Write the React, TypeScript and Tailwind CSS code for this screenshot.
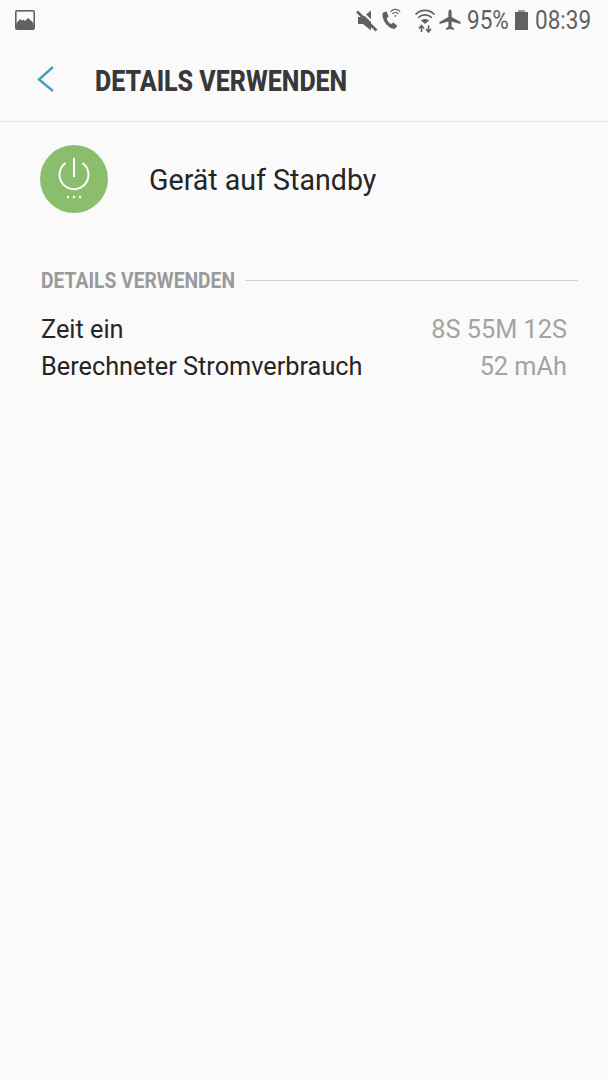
import React from "react";

const StatusIcons = () => (
  <div className="flex items-center text-[#616161]">
    {/* muted */}
    <svg width="24" height="24" viewBox="0 0 24 24" className="-mt-[1px]">
      <path d="M3 9h5l8-6.5v20L8 16H3z" fill="#616161" />
      <path d="M5 2 L23 19.5" stroke="#fafafa" strokeWidth="2" />
      <path d="M2 3.5 L21.5 22.5" stroke="#616161" strokeWidth="2.6" />
    </svg>
    {/* wifi call */}
    <svg width="26" height="26" viewBox="0 0 24 24" className="-ml-[1px]">
      <path d="M4.5 5.2 L7.8 4 L9.8 8.8 L8 10.5 C8.6 12.8 10 14.6 12.1 15.8 L14 14.2 L17.8 17.2 L16 19.8 C14.5 20.6 11.4 19.8 8.2 16.6 C5 13 3.4 8 4.5 5.2 Z" fill="#616161" />
      <path d="M11.5 4.2 C14.5 1.6 17.5 1.6 20.5 4.2" stroke="#616161" strokeWidth="1" fill="none" />
      <path d="M13.2 6.2 C15 4.7 17 4.7 18.8 6.2" stroke="#616161" strokeWidth="1" fill="none" />
      <path d="M15 8.2 L16 7.1 L17 8.2 L16 9.2 Z" fill="#616161" />
    </svg>
    {/* wifi data */}
    <svg width="22" height="26" viewBox="0 0 22 26" className="ml-[10px]">
      <path d="M1.5 7.5 C7 2 15 2 20.5 7.5" stroke="#616161" strokeWidth="1.7" fill="none" />
      <path d="M4.2 10.6 C8 7 14 7 17.8 10.6" stroke="#616161" strokeWidth="1.7" fill="none" />
      <path d="M7 13.6 C9.4 11.6 12.6 11.6 15 13.6 L11 17 Z" fill="#616161" />
      <path d="M7.5 25 V19.5 M5 21.5 L7.5 18.5 L10 21.5" stroke="#616161" strokeWidth="1.6" fill="none" />
      <path d="M14.5 18.5 V24 M12 22 L14.5 25 L17 22" stroke="#616161" strokeWidth="1.6" fill="none" />
    </svg>
    {/* airplane */}
    <svg width="22" height="22" viewBox="0 0 22 22" className="ml-[3px]">
      <path d="M11 0.5 C12 0.5 12.6 2 12.6 3.5 V8 L21.5 13 V15 L12.6 12.6 V17.6 L15 19.4 V21 L11 20 L7 21 V19.4 L9.4 17.6 V12.6 L0.5 15 V13 L9.4 8 V3.5 C9.4 2 10 0.5 11 0.5 Z" fill="#616161" />
    </svg>
    <span className="ml-[6px] w-[43px] text-[25px] leading-none scale-x-[0.9] origin-left whitespace-nowrap">95%</span>
    {/* battery */}
    <div className="ml-[5px] flex flex-col items-center">
      <div className="w-[7px] h-[2px] bg-[#9a9a9a]" />
      <div className="w-[13px] h-[18px] bg-[#616161]" />
    </div>
    <span className="ml-[7px] w-[56px] text-[25px] leading-none scale-x-[0.9] origin-left whitespace-nowrap">08:39</span>
  </div>
);

const App: React.FC = () => {
  return (
    <div className="w-[608px] h-[1080px] bg-[#fafafa] font-['Roboto',sans-serif] overflow-hidden flex flex-col">
      {/* status bar */}
      <div className="h-[40px] pl-[15px] pr-[17px] flex items-center justify-between">
        <svg width="20" height="20" viewBox="0 0 20 20" className="-mt-[1px]">
          <rect x="0" y="0" width="20" height="20" rx="2" fill="#616161" />
          <rect x="1.6" y="1.6" width="16.8" height="13" fill="#fafafa" />
          <path d="M1.6 13 L5 9 L7 10.5 L8.5 9.5 L10 11 L13 8 L15.5 10 L18.4 13 V15 H1.6 Z" fill="#616161" />
        </svg>
        <StatusIcons />
      </div>

      {/* action bar */}
      <div className="h-[82px] pb-[2px] flex items-center border-b border-[#e4e4e4]">
        <svg width="20" height="30" viewBox="0 0 20 30" className="ml-[36px] mt-[1px]">
          <path d="M17 3 L3 15.5 L17 27" transform="translate(0 -1)" stroke="#459fc4" strokeWidth="2.4" fill="none" />
        </svg>
        <h1 className="ml-[39px] mt-[4px] text-[29px] leading-none font-extrabold text-[#383838] scale-x-[0.862] origin-left whitespace-nowrap">
          DETAILS VERWENDEN
        </h1>
      </div>

      {/* app row */}
      <div className="mt-[23px] pl-[40px] flex items-center">
        <div className="w-[68px] h-[68px] rounded-full bg-[#8bbe6c] flex items-center justify-center">
          <svg width="68" height="68" viewBox="0 0 68 68">
            <path d="M25.5 18 A14.5 14.5 0 1 0 42.5 18" stroke="#fff" strokeWidth="2" fill="none" />
            <path d="M34 13 V32" stroke="#fff" strokeWidth="2" />
            <circle cx="28" cy="52" r="1.2" fill="#fff" />
            <circle cx="34" cy="52" r="1.2" fill="#fff" />
            <circle cx="40" cy="52" r="1.2" fill="#fff" />
          </svg>
        </div>
        <span className="ml-[41px] mt-[2px] text-[28.6px] leading-none text-[#252525]">Gerät auf Standby</span>
      </div>

      {/* section header */}
      <div className="mt-[56px] pl-[41px] pr-[30px] flex items-center">
        <span className="text-[22px] leading-[24px] font-bold text-[#9a9a9a] scale-x-[0.875] origin-left whitespace-nowrap w-[194px]">
          DETAILS VERWENDEN
        </span>
        <div className="ml-[10px] mb-[2px] flex-1 h-px bg-[#d0d0d0]" />
      </div>

      {/* rows */}
      <div className="mt-[18px] pl-[41px] pr-[41px] flex flex-col text-[25.3px] leading-[37px]">
        <div className="flex justify-between">
          <span className="text-[#252525]">Zeit ein</span>
          <span className="text-[#a3a3a3]">8S 55M 12S</span>
        </div>
        <div className="flex justify-between">
          <span className="text-[#252525]">Berechneter Stromverbrauch</span>
          <span className="text-[#a3a3a3]">52 mAh</span>
        </div>
      </div>
    </div>
  );
};

export default App;
